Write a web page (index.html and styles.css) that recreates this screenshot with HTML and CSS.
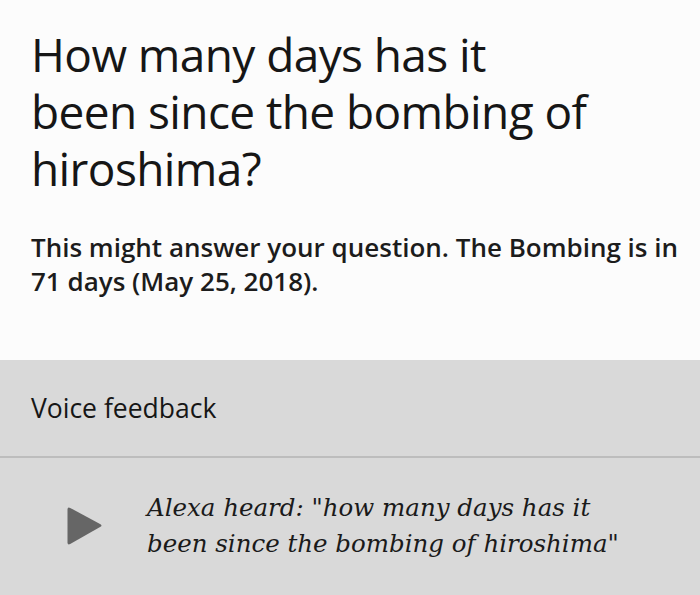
FILE: index.html
```html
<!DOCTYPE html>
<html lang="en">
<head>
<meta charset="utf-8">
<title>Alexa answer</title>
<link rel="stylesheet" href="styles.css">
</head>
<body>
<main class="card">
  <section class="result">
    <h1 class="question">How many days has it<br>been since the bombing of<br>hiroshima?</h1>
    <p class="answer">This might answer your question. The Bombing is in<br>71 days (May 25, 2018).</p>
  </section>
  <section class="feedback">
    <div class="feedback-head">Voice feedback</div>
    <div class="feedback-row">
      <svg class="play" width="37" height="40" viewBox="0 0 37 40" aria-hidden="true">
        <path d="M1.5 3.5 Q1.5 0.5 4.2 1.9 L34.5 18.2 Q36.5 19.5 34.5 20.8 L4.2 38.1 Q1.5 39.5 1.5 36.5 Z" fill="#666"/>
      </svg>
      <p class="heard">Alexa heard: "how many days has it<br>been since the bombing of hiroshima"</p>
    </div>
  </section>
</main>
</body>
</html>
```
FILE: styles.css
```css
html, body {
  margin: 0;
  padding: 0;
}
body {
  width: 700px;
  height: 595px;
  overflow: hidden;
  background: #fcfcfc;
  color: #161616;
  font-family: "Open Sans", "Noto Sans", sans-serif;
}
.card {
  display: flex;
  flex-direction: column;
  height: 595px;
}
.result {
  background: #fcfcfc;
  padding: 26px 4px 0 31px;
  height: 334px;
}
.question {
  margin: 0;
  font-size: 46px;
  line-height: 57px;
  font-weight: 400;
  letter-spacing: -0.6px;
}
.answer {
  margin: 33px 0 0;
  font-size: 26px;
  line-height: 34px;
  font-weight: 600;
  color: #1c1c1c;
}
.feedback {
  flex: 1;
  background: #d9d9d9;
}
.feedback-head {
  padding-left: 31px;
  font-size: 26.5px;
  line-height: 96px;
  border-bottom: 2px solid #bdbdbd;
}
.feedback-row {
  display: flex;
  align-items: center;
  padding: 32px 0 0 66px;
  gap: 44px;
}
.play {
  flex: none;
}
.heard {
  margin: 0;
  font-family: "DejaVu Serif", serif;
  font-style: italic;
  font-size: 24.5px;
  line-height: 36px;
  color: #1a1a1a;
}
```
